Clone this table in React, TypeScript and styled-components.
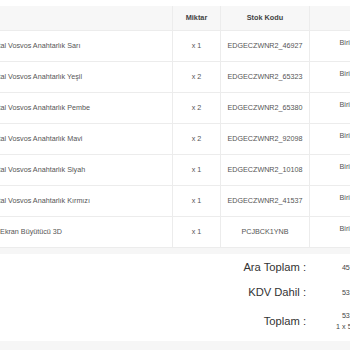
import React from 'react';
import styled, { createGlobalStyle } from 'styled-components';

const GlobalStyle = createGlobalStyle`
  html, body {
    margin: 0;
    padding: 0;
    background: #fff;
  }
  body {
    font-family: 'Liberation Sans', Arial, sans-serif;
  }
`;

const Page = styled.div`
  width: 350px;
  height: 350px;
  overflow: hidden;
  background: #fff;
  display: flex;
  flex-direction: column;
`;

// the screenshot is a crop: the sheet starts left of the viewport
const Sheet = styled.div`
  margin-left: -20px;
  width: 440px;
  padding-top: 6px;
  display: flex;
  flex-direction: column;
  flex: 1;
`;

const Table = styled.table`
  border-collapse: collapse;
  table-layout: fixed;
  width: 440px;
  background: #fff;
`;

const HeadRow = styled.tr`
  background: #f7f7f7;
  height: 24px;
`;

const HeadCell = styled.th`
  border: 1px solid #ececec;
  border-top: none;
  font-size: 7.3px;
  font-weight: bold;
  color: #444;
  text-align: center;
  padding: 0;
`;

const Row = styled.tr`
  height: 31px;
`;

const Cell = styled.td<{ align?: 'left' | 'center'; top?: boolean }>`
  border: 1px solid #ececec;
  font-size: 7.2px;
  color: #555;
  text-align: ${({ align }) => align || 'center'};
  vertical-align: ${({ top }) => (top ? 'top' : 'middle')};
  padding: ${({ top }) => (top ? '7px 0 0 0' : '0')};
  padding-left: ${({ align }) => (align === 'left' ? '7.5px' : '0')};
  white-space: nowrap;
  overflow: hidden;
`;

const Divider = styled.div`
  height: 6px;
  background: #f6f6f6;
`;

const Totals = styled.div`
  background: #fff;
  padding: 1px 0 0;
  display: flex;
  flex-direction: column;
`;

const TotalRow = styled.div<{ tall?: boolean }>`
  display: grid;
  grid-template-columns: 327px 98px;
  align-items: center;
  height: ${({ tall }) => (tall ? '33px' : '25px')};
`;

const TotalLabel = styled.div`
  text-align: right;
  padding-right: 1px;
  font-size: 11.2px;
  color: #333;
`;

const TotalValue = styled.div`
  text-align: center;
  font-size: 7.2px;
  color: #444;
  display: flex;
  flex-direction: column;
  align-items: center;
  gap: 2px;
  white-space: nowrap;
`;

const Footer = styled.div`
  flex: 1;
  background: #f6f6f6;
  margin-top: 3px;
`;

interface Item {
  name: string;
  qty: number;
  code: string;
}

const items: Item[] = [
  { name: 'Metal Vosvos Anahtarlık Sarı', qty: 1, code: 'EDGECZWNR2_46927' },
  { name: 'Metal Vosvos Anahtarlık Yeşil', qty: 2, code: 'EDGECZWNR2_65323' },
  { name: 'Metal Vosvos Anahtarlık Pembe', qty: 2, code: 'EDGECZWNR2_65380' },
  { name: 'Metal Vosvos Anahtarlık Mavi', qty: 2, code: 'EDGECZWNR2_92098' },
  { name: 'Metal Vosvos Anahtarlık Siyah', qty: 1, code: 'EDGECZWNR2_10108' },
  { name: 'Metal Vosvos Anahtarlık Kırmızı', qty: 1, code: 'EDGECZWNR2_41537' },
  { name: 'Ön Ekran Büyütücü 3D', qty: 1, code: 'PCJBCK1YNB' },
];

const App: React.FC = () => {
  return (
    <Page>
      <GlobalStyle />
      <Sheet>
        <Table>
          <colgroup>
            <col style={{ width: 192 }} />
            <col style={{ width: 48 }} />
            <col style={{ width: 89 }} />
            <col style={{ width: 94 }} />
            <col style={{ width: 17 }} />
          </colgroup>
          <thead>
            <HeadRow>
              <HeadCell></HeadCell>
              <HeadCell>Miktar</HeadCell>
              <HeadCell>Stok Kodu</HeadCell>
              <HeadCell></HeadCell>
              <HeadCell></HeadCell>
            </HeadRow>
          </thead>
          <tbody>
            {items.map((item) => (
              <Row key={item.code}>
                <Cell align="left">{item.name}</Cell>
                <Cell>x {item.qty}</Cell>
                <Cell>{item.code}</Cell>
                <Cell top>Birim Fiyat</Cell>
                <Cell></Cell>
              </Row>
            ))}
          </tbody>
        </Table>
        <Divider />
        <Totals>
          <TotalRow>
            <TotalLabel>Ara Toplam :</TotalLabel>
            <TotalValue>45,00 TL</TotalValue>
          </TotalRow>
          <TotalRow>
            <TotalLabel>KDV Dahil :</TotalLabel>
            <TotalValue>53,00 TL</TotalValue>
          </TotalRow>
          <TotalRow tall>
            <TotalLabel>Toplam :</TotalLabel>
            <TotalValue>
              <span>53,00 TL</span>
              <span>1 x 53,00 TL</span>
            </TotalValue>
          </TotalRow>
        </Totals>
        <Footer />
      </Sheet>
    </Page>
  );
};

export default App;
